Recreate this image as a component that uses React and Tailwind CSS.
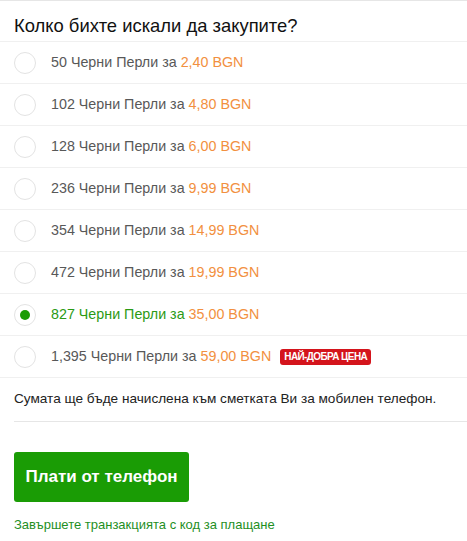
import { useState } from "react";

const packs = [
  { amount: "50", price: "2,40" },
  { amount: "102", price: "4,80" },
  { amount: "128", price: "6,00" },
  { amount: "236", price: "9,99" },
  { amount: "354", price: "14,99" },
  { amount: "472", price: "19,99" },
  { amount: "827", price: "35,00" },
  { amount: "1,395", price: "59,00", best: true },
];

const App = () => {
  const [selected, setSelected] = useState(6);

  return (
    <div className="w-[467px] bg-white font-['Liberation_Sans',Arial,sans-serif] border-t border-[#e6e6e6]">
      <h1 className="pl-[14px] pt-[13px] pb-[3px] text-[18.4px] leading-[24px] text-[#111] border-b border-[#f0f0f0]">
        Колко бихте искали да закупите?
      </h1>

      <ul>
        {packs.map((pack, idx) => {
          const active = idx === selected;
          return (
            <li
              key={idx}
              onClick={() => setSelected(idx)}
              className="h-[42px] flex items-center pl-[14px] border-b border-[#f0f0f0] cursor-pointer"
            >
              <span className="w-[22px] h-[22px] rounded-full border border-[#e3e3e3] flex items-center justify-center">
                {active && <span className="w-[10px] h-[10px] rounded-full bg-[#1a9c05]" />}
              </span>
              <span className={`ml-[15px] text-[14.3px] ${active ? "text-[#2b9a14]" : "text-[#585858]"}`}>
                {pack.amount} Черни Перли за <span className="text-[#f29040]">{pack.price} BGN</span>
              </span>
              {pack.best && (
                <span className="ml-[9px] h-[16px] px-[4px] rounded-[3px] bg-[#d4141c] text-white text-[10px] font-bold tracking-[-0.6px] leading-[16px]">
                  НАЙ-ДОБРА ЦЕНА
                </span>
              )}
            </li>
          );
        })}
      </ul>

      <div className="ml-[14px]">
        <p className="pt-[13px] pb-[14px] text-[13.6px] leading-[16px] text-[#222] border-b border-[#e6e6e6]">
          Сумата ще бъде начислена към сметката Ви за мобилен телефон.
        </p>
        <button className="mt-[30px] w-[175px] h-[50px] rounded-[3px] bg-[#1a9c05] text-white text-[17px] font-bold">
          Плати от телефон
        </button>
        <p className="mt-[15px] text-[13px] leading-[16px] text-[#1f8f1f]">
          Завършете транзакцията с код за плащане
        </p>
      </div>
    </div>
  );
};

export default App;
